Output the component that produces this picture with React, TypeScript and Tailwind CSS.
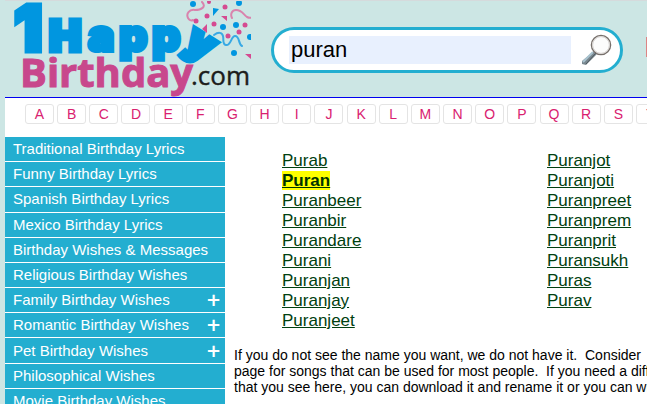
import React from "react";

const letters = "ABCDEFGHIJKLMNOPQRSTUVWXYZ".split("");

const menu = [
  { label: "Traditional Birthday Lyrics" },
  { label: "Funny Birthday Lyrics" },
  { label: "Spanish Birthday Lyrics" },
  { label: "Mexico Birthday Lyrics" },
  { label: "Birthday Wishes & Messages" },
  { label: "Religious Birthday Wishes" },
  { label: "Family Birthday Wishes", more: true },
  { label: "Romantic Birthday Wishes", more: true },
  { label: "Pet Birthday Wishes", more: true },
  { label: "Philosophical Wishes" },
  { label: "Movie Birthday Wishes" },
];

const columns = [
  ["Purab", "Puran", "Puranbeer", "Puranbir", "Purandare", "Purani", "Puranjan", "Puranjay", "Puranjeet"],
  ["Puranjot", "Puranjoti", "Puranpreet", "Puranprem", "Puranprit", "Puransukh", "Puras", "Purav"],
];

const Logo = () => {
  return (
    <svg width="246" height="97" viewBox="5 0 246 97" role="img" aria-label="1HappyBirthday.com" className="shrink-0">
      <g fontFamily="Inter, sans-serif" fontWeight="900" fill="#0096e0" stroke="#0096e0" strokeWidth="4">
        <text x="14" y="50" fontSize="63" strokeWidth="5">1</text>
        <text x="49" y="50" fontSize="43" strokeWidth="5">H</text>
        <text x="88" y="50" fontSize="44">a</text>
        <text x="119" y="50" fontSize="44">p</text>
        <text x="152" y="50" fontSize="44">p</text>
        <text x="198" y="55" fontSize="41" strokeWidth="6" textAnchor="middle" transform="rotate(32 198 47)">y</text>
      </g>
      <g fontFamily="'Open Sans', sans-serif">
        <text x="20" y="86" fontSize="40" fontWeight="700" fill="#c8478c" stroke="#c8478c" strokeWidth="1">Birthday</text>
        <text x="191" y="84" fontSize="26" fill="#1d1d1b" stroke="#1d1d1b" strokeWidth="0.4">.com</text>
      </g>
      <g fill="none" strokeWidth="2" strokeLinecap="round">
        <path d="M202 1c5 5-1 8-7 8-6-1-9 4-7 8 1 2 3 3 5 2" stroke="#d983ad" />
        <path d="M232 17c-2-4 0-8 4-8 6 0 7 4 11 7 2 1 4 1 6 0" stroke="#d983ad" />
        <path d="M214 34c4-3 8-3 9 1s-1 8 3 9c5 1 5-9 9-9 5 0 3 8 7 10" stroke="#39a9e4" />
      </g>
      <g fill="#0096e0">
        <circle cx="193" cy="3" r="3" />
        <circle cx="239" cy="2" r="3" />
        <circle cx="223" cy="26" r="3" />
        <circle cx="236" cy="24" r="3" />
        <circle cx="234" cy="52" r="3" />
        <circle cx="250" cy="36" r="3" />
        <path d="M213 7l6 1-6 7z" />
      </g>
      <g fill="#d54a91">
        <circle cx="209" cy="1" r="2" />
        <circle cx="225" cy="6" r="2.5" />
        <circle cx="207" cy="15" r="2.5" />
        <circle cx="196" cy="20" r="2.5" />
        <circle cx="214" cy="23" r="2.5" />
        <circle cx="245" cy="24" r="2.5" />
        <circle cx="239" cy="31" r="2.5" />
        <circle cx="228" cy="35" r="2.5" />
        <path d="M221 15h6v5zM202 28l5-5v9zM245 53h6v5z" />
      </g>
    </svg>
  );
};

const SearchIcon = () => {
  return (
    <svg width="32" height="32" viewBox="0 0 32 32" aria-hidden="true">
      <path d="M13 17l3 3L5 31l-4-1v-3z" fill="#79878f" />
      <path d="M12 18L2 28" stroke="#a9c3cf" strokeWidth="2" />
      <path d="M15 19L5 30" stroke="#4d565b" strokeWidth="1" />
      <circle cx="20" cy="11" r="9.6" fill="#fcfcfc" stroke="#77706c" strokeWidth="1.4" />
      <circle cx="20" cy="11" r="8.4" fill="none" stroke="#d3cfcc" strokeWidth="1" />
    </svg>
  );
};

export default function App() {
  return (
    <div className="h-screen overflow-hidden bg-[#cce6e4] pl-[5px] font-['Liberation_Sans',Arial,sans-serif] text-black">
      <header className="flex h-[98px] border-t border-b border-t-[#d5dadc] border-b-[#0000f0]">
        <Logo />
        <form className="mt-[26px] ml-5 flex h-[46px] w-[352px] shrink-0 items-center rounded-full border-3 border-[#23aed0] bg-white pl-[15px]" onSubmit={(e) => e.preventDefault()}>
          <input
            type="text"
            aria-label="Search names"
            defaultValue="puran"
            className="h-7 w-[282px] bg-[#e8f0fe] px-0.5 pb-0.5 text-[22px] outline-none"
          />
          <button type="submit" aria-label="Search" className="ml-2.5">
            <SearchIcon />
          </button>
        </form>
        <button type="button" aria-label="Menu" className="mt-9 ml-[23px] h-5 w-8 shrink-0 bg-[#dc8585]"></button>
      </header>

      <div className="bg-white">
        <nav aria-label="Names by letter" className="pt-1.5 pb-[13px] pl-5">
          <div className="flex w-[833px] justify-between">
            {letters.map((letter) => (
              <a key={letter} href={`#${letter}`} className="h-5 w-[29px] shrink-0 rounded-[3px] border border-[#e4e4e4] text-center text-sm leading-[18px] text-[#d9216f]">
                {letter}
              </a>
            ))}
          </div>
        </nav>

        <div className="flex">
          <nav aria-label="Birthday songs" className="grid min-h-[277px] w-[220px] shrink-0 auto-rows-fr self-start">
            {menu.map((item) => (
              <a key={item.label} href="#" className="flex items-center justify-between border-b border-white bg-[#23aed0] pr-1 pl-2 text-[15px] leading-6 whitespace-nowrap text-white">
                {item.label}
                {item.more && <span className="font-['DejaVu_Sans',sans-serif] text-lg leading-6 font-bold">+</span>}
              </a>
            ))}
          </nav>

          <main className="min-w-0 grow overflow-hidden pl-[9px]">
            <div className="flex pt-3.5 pl-12">
              {columns.map((names) => (
                <ul key={names[0]} className="w-[265px] shrink-0 text-[17px] leading-5">
                  {names.map((name) => (
                    <li key={name}>
                      <a href="#" className={name === "Puran" ? "bg-[#ffff00] font-bold text-[#003300] underline" : "text-[#004010] underline"}>
                        {name}
                      </a>
                    </li>
                  ))}
                </ul>
              ))}
            </div>
            <p className="mt-4 text-sm leading-4 whitespace-nowrap">
              If you do not see the name you want, we do not have it.&nbsp; Consider
              <br />
              page for songs that can be used for most people.&nbsp; If you need a different
              <br />
              that you see here, you can download it and rename it or you can write
            </p>
          </main>
        </div>
      </div>
    </div>
  );
}
